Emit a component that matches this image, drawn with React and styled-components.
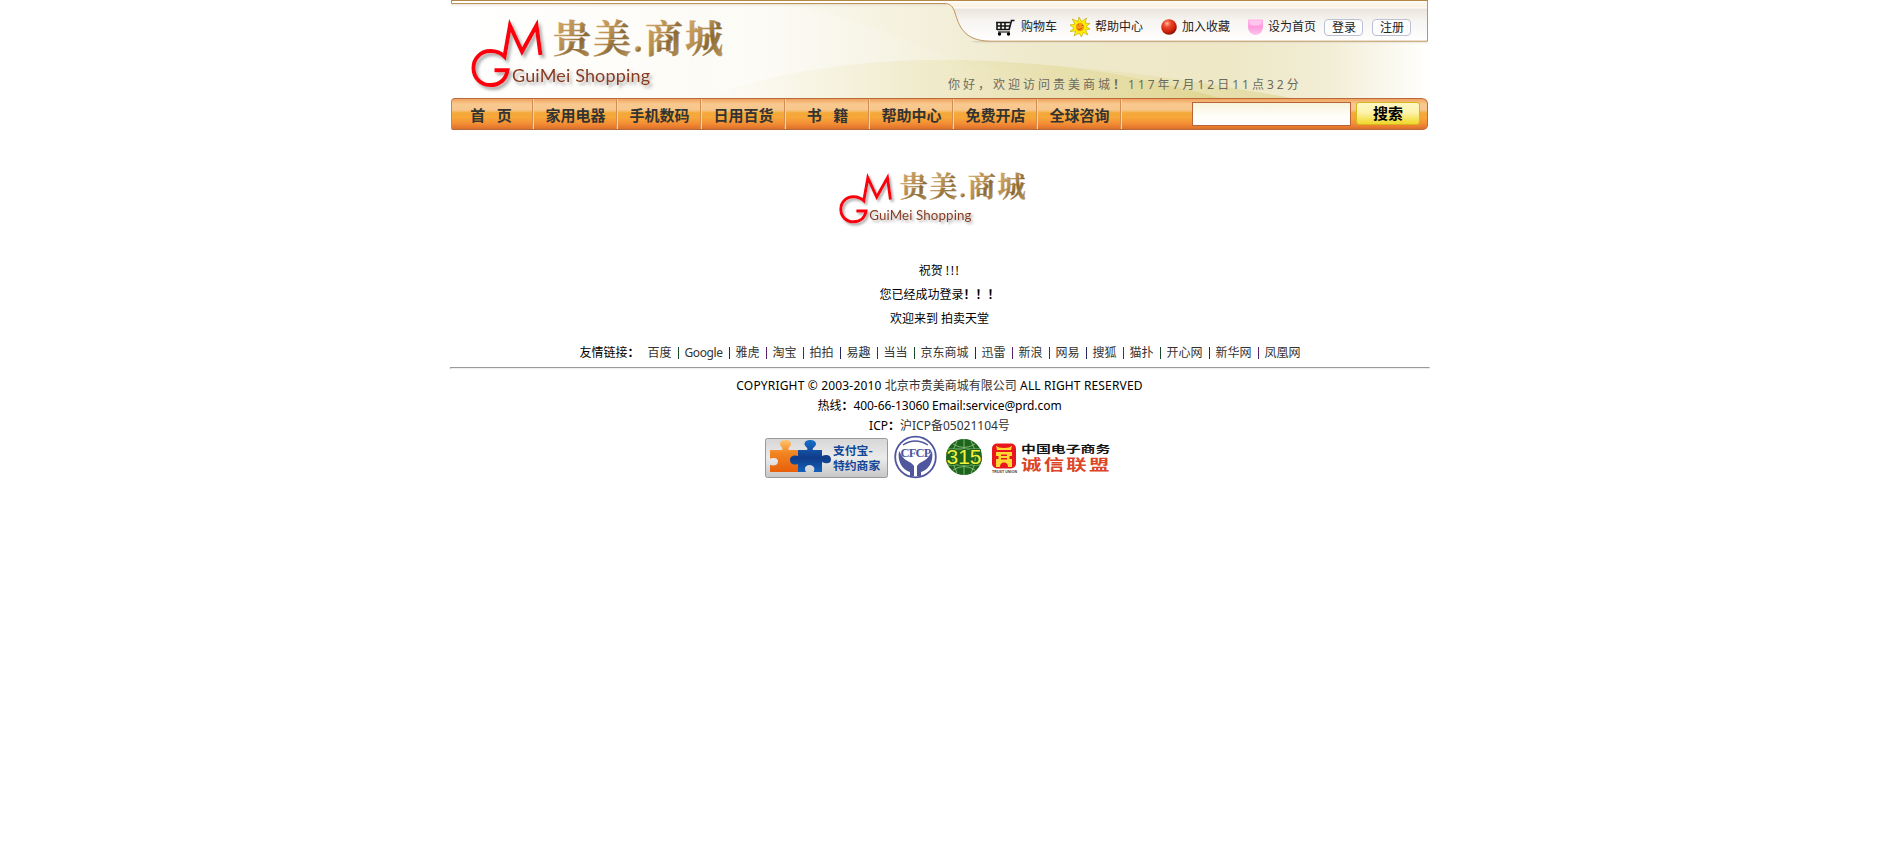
import React from 'react';
import styled, { createGlobalStyle } from 'styled-components';

const GlobalStyle = createGlobalStyle`
  body {
    margin: 0;
    background: #fff;
    color: #000;
    font: 12px/20px 'Noto Sans', 'Noto Sans CJK SC', sans-serif;
  }
`;

const Shell = styled.div`
  width: 979px;
  margin: 0 auto;
`;

const Header = styled.header`
  display: grid;
  grid-template-columns: 977px;
  grid-template-rows: 98px;
  margin: 0 1px;
`;

const Backdrop = styled.svg`
  grid-area: 1 / 1;
  display: block;
`;

const HeaderContent = styled.div`
  grid-area: 1 / 1;
  z-index: 1;
  display: flex;
  justify-content: space-between;
`;

const LogoArt = styled.svg`
  display: block;
  flex: none;
  width: ${(p) => p.$width}px;
  height: ${(p) => p.$width * 0.28}px;
  overflow: visible;
`;

const LogoLink = styled.a`
  padding: 15px 0 0 20px;
`;

const HeaderSide = styled.div`
  width: 480px;
  display: flex;
  flex-direction: column;
`;

const Tools = styled.div`
  height: 42px;
  padding: 12px 17px 0 0;
  box-sizing: border-box;
  display: flex;
  align-items: center;
  justify-content: flex-end;
`;

const Tool = styled.a`
  display: flex;
  align-items: center;
  gap: ${(p) => p.$gap || 6}px;
  margin-right: ${(p) => p.$after}px;
  color: #222;
  line-height: 18px;
  white-space: nowrap;
  svg { display: block; }
`;

const PillButton = styled.button`
  width: 39px;
  height: 17px;
  padding: 0;
  margin-left: ${(p) => p.$before || 0}px;
  border: 1px solid #bcc0d4;
  border-radius: 4px;
  background: #fdfdfd;
  color: #222;
  font: inherit;
  line-height: 15px;
  text-indent: 1px;
`;

const Greeting = styled.p`
  margin: 33px 0 0;
  color: #6b6a5e;
  letter-spacing: 3px;
  line-height: 20px;
  white-space: pre;
`;

const Spaced = styled.span`
  letter-spacing: ${(p) => p.$by}px;
  color: ${(p) => p.$color || 'inherit'};
`;

const Heavy = styled.b`
  font-weight: 700;
`;

const NavBar = styled.nav`
  height: 32px;
  margin: 0 1px;
  box-sizing: border-box;
  display: flex;
  border: 1px solid #b86a3c;
  border-left-color: #d9803a;
  border-radius: 4px 6px 5px 2px;
  background: linear-gradient(#f0a25e 0, #f8c98f 5px, #f7c68c 11px, #f4a836 14px, #f6a83a 18px, #f49136 24px, #e87a2e 28px, #d9702c 100%);
`;

const NavItem = styled.a`
  width: ${(p) => p.$width || 84}px;
  box-sizing: border-box;
  border-right: 1px solid #f9d3a4;
  box-shadow: inset -1px 0 0 #d28d50;
  color: #333;
  font-size: 15px;
  font-weight: 700;
  line-height: 32px;
  text-align: center;
  white-space: pre;
  text-indent: ${(p) => p.$shift || 0}px;
`;

const SearchForm = styled.div`
  flex: 1;
  display: flex;
  justify-content: flex-end;
  padding: 3px 7px 0 0;
  gap: 5px;
`;

const SearchInput = styled.input`
  width: 159px;
  height: 24px;
  box-sizing: border-box;
  border: 1px solid #b9633a;
  background: linear-gradient(#f6f3dc, #fffef8 60%, #fff);
  outline: none;
`;

const SearchButton = styled.button`
  width: 64px;
  height: 23px;
  padding: 0 0 1px;
  border: 1px solid #d6b71e;
  border-radius: 3px;
  background: linear-gradient(#fdf8c4, #fdf3ac 45%, #f3dc3c 90%, #efd733);
  color: #000;
  font: 700 15px/20px 'Noto Sans CJK SC', sans-serif;
`;

const Main = styled.main`
  display: flex;
  flex-direction: column;
  align-items: center;
  padding-top: 40px;
`;

const LogoSpot = styled.div`
  height: 89px;
  margin-right: 14px;
`;

const Message = styled.p`
  margin: 0;
  line-height: 24px;
  white-space: pre;
`;

const Footer = styled.footer`
  display: flex;
  flex-direction: column;
  align-items: center;
`;

const FriendLinks = styled.div`
  margin: 12px 0 0 1px;
  display: flex;
  white-space: nowrap;
`;

const FriendTitle = styled.span`
  width: 68px;
`;

const FriendLink = styled.a`
  display: flex;
  color: #333;
  letter-spacing: ${(p) => (p.$latin ? '-0.4px' : 0)};
  width: ${(p) => p.$width}px;
`;

const Bar = styled.i`
  width: 1px;
  height: 12px;
  margin: 4px 6px 0;
  background: ${(p) => p.$color};
`;

const Rule = styled.hr`
  align-self: stretch;
  margin: 4px -1px 7px 0;
  height: 0;
  border: 1px solid;
  border-color: #9a9a9a #eee #eee #9a9a9a;
`;

const Line = styled.p`
  margin: 0;
  white-space: pre;
`;

const Badges = styled.div`
  display: flex;
  height: 44px;
  margin: -1px 4px 0 0;
`;

const Badge = styled.svg`
  display: block;
  flex: none;
  margin-left: ${(p) => p.$before || 0}px;
  margin-top: ${(p) => p.$top || 0}px;
  overflow: visible;
`;

const serif = "'Noto Serif CJK SC', 'Noto Sans CJK SC', serif";

function Logo({ width, id }) {
  return (
    <LogoArt $width={width} viewBox="0 0 254 71">
      <defs>
        <linearGradient id={id} x1="0" y1="0" x2="1" y2="1">
          <stop offset="0" stopColor="#d9b377" />
          <stop offset=".45" stopColor="#b98f50" />
          <stop offset=".62" stopColor="#8a6934" />
          <stop offset="1" stopColor="#c5a168" />
        </linearGradient>
        <filter id={`${id}s`} x="-20%" y="-20%" width="150%" height="150%">
          <feDropShadow dx="2.5" dy="3" stdDeviation="1.6" floodColor="#777" floodOpacity=".6" />
        </filter>
      </defs>
      <path
        d="M23.500 55.300H36.500C35 65 28 70 19.500 70C10 70 2.500 63 2.500 53C2.500 43 10 36 19.500 36C26 36 30 38 33.500 41.500L39 10.500L51 36.500L65.500 10.500L69.500 40"
        fill="none"
        stroke="#fb0007"
        strokeWidth="4"
        filter={`url(#${id}s)`}
      />
      <g fill={`url(#${id})`} stroke={`url(#${id})`} strokeWidth=".4" fontFamily={serif} fontSize="38" fontWeight="700">
        <text x="82" y="37">贵</text>
        <text x="122" y="37">美</text>
        <circle cx="167" cy="34" r="2.800" />
        <text x="174" y="37">商</text>
        <text x="214" y="37">城</text>
      </g>
      <text x="41" y="67" fill="#8a3b1c" fontFamily="Lato, sans-serif" fontSize="18" textLength="138" filter={`url(#${id}s)`}>
        GuiMei Shopping
      </text>
    </LogoArt>
  );
}

function HeaderArt() {
  return (
    <Backdrop width="977" height="98" viewBox="0 0 977 98">
      <defs>
        <linearGradient id="base" x1="0" x2="1">
          <stop offset="0" stopColor="#fff" />
          <stop offset=".2" stopColor="#fdfcf8" />
          <stop offset=".32" stopColor="#fbfaf2" />
          <stop offset=".45" stopColor="#f5f2e0" />
          <stop offset=".6" stopColor="#efe9cc" />
          <stop offset=".8" stopColor="#eee8c6" />
          <stop offset=".9" stopColor="#f2eed6" />
          <stop offset="1" stopColor="#fffffd" />
        </linearGradient>
        <linearGradient id="wave" x1="0" x2="1">
          <stop offset="0" stopColor="#e5dc9e" stopOpacity="0" />
          <stop offset=".5" stopColor="#e2d993" stopOpacity=".5" />
          <stop offset="1" stopColor="#d3c567" stopOpacity=".7" />
        </linearGradient>
        <linearGradient id="ray" x1="0" x2="1">
          <stop offset="0" stopColor="#fff" stopOpacity="0" />
          <stop offset=".3" stopColor="#fff" stopOpacity=".5" />
          <stop offset="1" stopColor="#fff" stopOpacity="0" />
        </linearGradient>
        <linearGradient id="tab" x1="0" y1="0" x2="0" y2="1">
          <stop offset="0" stopColor="#fff" />
          <stop offset=".15" stopColor="#fcf0df" />
          <stop offset=".2" stopColor="#fff" />
          <stop offset=".21" stopColor="#eae4da" />
          <stop offset=".5" stopColor="#f7f5f2" />
          <stop offset="1" stopColor="#fff" />
        </linearGradient>
        <linearGradient id="edge" x1="0" y1="0" x2="0" y2="1">
          <stop offset="0" stopColor="#b9a88c" stopOpacity=".5" />
          <stop offset="1" stopColor="#fff" stopOpacity="0" />
        </linearGradient>
      </defs>
      <rect width="977" height="98" fill="url(#base)" />
      <path d="M180 98V4H340C410 20 480 45 580 98Z" fill="url(#ray)" opacity=".5" />
      <path d="M250 98C340 66 440 56 540 61C640 66 700 80 770 98Z" fill="url(#wave)" opacity=".6" />
      <path d="M500 61C620 62 730 78 840 98H640C600 80 560 68 500 61Z" fill="url(#wave)" opacity=".55" />
      <path d="M0 3H495V8H0Z" fill="url(#edge)" />
      <path d="M520 41H977V45H530Z" fill="url(#edge)" />
      <path d="M0 0H976.500V41.500H545C512 41.500 508 25 504 13C502 6 499 3.500 493 3.500H0Z" fill="url(#tab)" />
      <path d="M0 1H500V3H0Z" fill="#fff" />
      <path d="M.5 0V3.500H493C499 3.500 502 6 504 13C508 25 512 41.200 540 41.200H976.500V0" fill="none" stroke="#bd955c" />
      <path d="M0 .5H977" stroke="#b58743" />
    </Backdrop>
  );
}

const CartIcon = () => (
  <svg width="21" height="17" viewBox="0 0 21 17">
    <path d="M2 3.500H16M3 7H15.500M3 10.500H15M3 3V11M7 4V11M11 4V11M15 11L17.500 1.500H20.500" fill="none" stroke="#151515" strokeWidth="1.600" />
    <path d="M4 13H16" stroke="#222" strokeWidth="1.200" />
    <circle cx="5.500" cy="15" r="1.700" />
    <circle cx="14.500" cy="15" r="1.700" />
  </svg>
);

const SunIcon = () => (
  <svg width="20" height="20" viewBox="0 0 20 20">
    <path
      d="M9 0L11.500 4.500L16.500 1L15 6L20 6.500L16 9.500L20 12L15.500 13L18 18L13 15.500L11.500 20L9 16L4 19L5.500 14L0 14.500L4 11L0 8L5 7L2 2L8 4.500Z"
      fill="#fff000"
      stroke="#b9a100"
      strokeWidth=".6"
    />
    <circle cx="10" cy="10" r="4.200" fill="#f49b13" />
    <path d="M7.500 8H9M12 8.500H13M7.500 12Q10 13.500 12 11" stroke="#d04c00" fill="none" />
  </svg>
);

const BallIcon = () => (
  <svg width="16" height="17" viewBox="0 0 16 17">
    <defs>
      <radialGradient id="ball" cx=".38" cy=".28" r=".75">
        <stop offset="0" stopColor="#ffb9a4" />
        <stop offset=".3" stopColor="#ee4a2b" />
        <stop offset=".75" stopColor="#c91c08" />
        <stop offset="1" stopColor="#74150c" />
      </radialGradient>
    </defs>
    <circle cx="8" cy="8" r="7.800" fill="url(#ball)" />
  </svg>
);

const ShieldIcon = () => (
  <svg width="15" height="17" viewBox="0 0 15 17">
    <defs>
      <linearGradient id="pink" x1="0" y1="0" x2="0" y2="1">
        <stop offset="0" stopColor="#ffb2e8" />
        <stop offset=".5" stopColor="#ff9bdc" />
        <stop offset="1" stopColor="#ffc6ee" />
      </linearGradient>
    </defs>
    <path d="M0 .5H15V8C15 13 11 16 7.500 16C4 16 0 13 0 8Z" fill="url(#pink)" />
    <path d="M1.500 1.500H13.500V5Q7.500 8 1.500 5Z" fill="#ffc6ed" />
  </svg>
);

const AlipayBadge = () => (
  <Badge $top={3} width="123" height="40" viewBox="0 0 123 40">
    <defs>
      <linearGradient id="plate" x1="0" y1="0" x2="0" y2="1">
        <stop offset="0" stopColor="#d6d6d6" />
        <stop offset=".5" stopColor="#ebebeb" />
        <stop offset="1" stopColor="#c6c6c6" />
      </linearGradient>
      <linearGradient id="orange" x1="0" y1="0" x2="0" y2="1">
        <stop offset="0" stopColor="#ffc56e" />
        <stop offset=".4" stopColor="#f28522" />
        <stop offset="1" stopColor="#e85f0a" />
      </linearGradient>
      <linearGradient id="blue" x1="0" y1="0" x2="0" y2="1">
        <stop offset="0" stopColor="#1770cc" />
        <stop offset=".55" stopColor="#103b88" />
        <stop offset="1" stopColor="#1261b8" />
      </linearGradient>
    </defs>
    <rect x=".5" y=".5" width="122" height="39" rx="2" fill="url(#plate)" stroke="#999" />
    <path d="M5 12H17C19 10 15 8.500 15 6C15 .5 26 .5 26 6C26 8.500 22 10 24 12H34V18H27V26H34V34H5V27C9 28 13 27.500 13 23.500C13 19.500 9 19.500 5 20.500Z" fill="url(#orange)" />
    <path d="M33 12H42C44 10 39.500 8.500 39.500 6C39.500 .5 51 .5 51 6C51 8.500 46.500 10 48 12H57V18C61 16 66 17 66 21.500C66 26 61 26 57 24V34H48.500C51 30 48 27 44.500 27C41 27 38.500 30 41 34H33V26C29 27.500 25 26 25 22C25 18 29 16.500 33 18Z" fill="url(#blue)" />
    <g fill="#124698" fontFamily="'Noto Sans CJK SC', sans-serif" fontSize="11.800" fontWeight="700">
      <text x="68" y="17">支付宝-</text>
      <text x="68" y="32">特约商家</text>
    </g>
  </Badge>
);

const CfcpBadge = () => (
  <Badge $before={6} width="43" height="44" viewBox="0 0 43 44">
    <circle cx="21.500" cy="22" r="20.300" fill="#fff" stroke="#4f569e" strokeWidth="1.800" />
    <path d="M5 16C3 27 9 35 16 37V41H20V31C17 26 12 27 8 21ZM38 16C40 27 34 35 27 37V41H23V31C26 26 31 27 35 21Z" fill="#4f569e" />
    <path d="M9 10Q21 2 34 10" fill="none" stroke="#4f569e" strokeWidth="1.300" />
    <text x="21.500" y="22" fill="#4f569e" textAnchor="middle" fontFamily="'Liberation Serif', serif" fontSize="12.500" fontWeight="700" letterSpacing="-.8">CFCP</text>
  </Badge>
);

const GlobeBadge = () => (
  <Badge $before={8} width="38" height="44" viewBox="0 0 38 44">
    <circle cx="19" cy="22" r="18" fill="#1d641d" />
    <path d="M19 4V40M12 6Q3 22 12 38M26 6Q35 22 26 38M3 14H35M3 30H35M8 9Q19 16 30 9M8 35Q19 28 30 35" fill="none" stroke="#8fbd7c" strokeWidth=".9" />
    <text x="1.500" y="29" fill="#f4f13a" stroke="#1d641d" strokeWidth="2" paintOrder="stroke" fontFamily="'Liberation Sans', sans-serif" fontSize="20" textLength="35" lengthAdjust="spacingAndGlyphs">315</text>
  </Badge>
);

const UnionBadge = () => (
  <Badge $before={8} width="120" height="44" viewBox="0 0 120 44">
    <rect x="1" y="8.500" width="24" height="25" rx="5" fill="#e8171d" />
    <path d="M5 10.500Q7 13 13 13Q19 13 21 10.500L20 15H6ZM5 17H21V21H18.500V24H21V32H17Q17 27.500 13 27.500Q9 27.500 9 32H5V24H7.500V21H5ZM10 19.500V21H16V19.500ZM10 23V24.500H16V23Z" fill="#ffd834" fillRule="evenodd" />
    <text x="1" y="37.500" fill="#333" fontFamily="'Liberation Sans', sans-serif" fontSize="3.500" fontWeight="700" textLength="25">TRUST UNION</text>
    <g fontFamily="'Noto Sans CJK SC', sans-serif" fontWeight="700">
      <text transform="translate(30 17.500) scale(1.38 .95)" fontSize="10.800" fill="#141414">中国电子商务</text>
      <text transform="translate(30 35) scale(1.36 .98)" fontSize="15" fill="#dc4526" textLength="65">诚信联盟</text>
    </g>
  </Badge>
);

const NAV = [
  { text: '首   页', width: 82, shift: -3 },
  { text: '家用电器' },
  { text: '手机数码' },
  { text: '日用百货' },
  { text: '书   籍' },
  { text: '帮助中心' },
  { text: '免费开店' },
  { text: '全球咨询' },
];

const FRIENDS = ['百度', 'Google', '雅虎', '淘宝', '拍拍', '易趣', '当当', '京东商城', '迅雷', '新浪', '网易', '搜狐', '猫扑', '开心网', '新华网', '凤凰网'];
const BAR_COLORS = ['#56206a', '#164a28', '#26265e'];

export default function App() {
  return (
    <Shell>
      <GlobalStyle />
      <Header>
        <HeaderArt />
        <HeaderContent>
          <LogoLink><Logo width={254} id="gold" /></LogoLink>
          <HeaderSide>
            <Tools>
              <Tool $after={13}><CartIcon />购物车</Tool>
              <Tool $after={18} $gap={5}><SunIcon />帮助中心</Tool>
              <Tool $after={18} $gap={5}><BallIcon />加入收藏</Tool>
              <Tool $after={8} $gap={5}><ShieldIcon />设为首页</Tool>
              <PillButton>登录</PillButton>
              <PillButton $before={9}>注册</PillButton>
            </Tools>
            <Greeting>你好，欢迎访问贵美商城<Heavy>！</Heavy>117年7月12日11点32分</Greeting>
          </HeaderSide>
        </HeaderContent>
      </Header>
      <NavBar>
        {NAV.map((item) => (
          <NavItem key={item.text} $width={item.width} $shift={item.shift}>{item.text}</NavItem>
        ))}
        <SearchForm>
          <SearchInput />
          <SearchButton>搜索</SearchButton>
        </SearchForm>
      </NavBar>
      <Main>
        <LogoSpot><Logo width={188} id="goldSmall" /></LogoSpot>
        <Message>祝贺 <Spaced $by={1.6}>!!!</Spaced></Message>
        <Message>您已经成功登录<Heavy>！！！</Heavy></Message>
        <Message>欢迎来到 拍卖天堂</Message>
      </Main>
      <Footer>
        <FriendLinks>
          <FriendTitle>友情链接<Heavy>：</Heavy></FriendTitle>
          {FRIENDS.map((name, i) => (
            <React.Fragment key={name}>
              {i > 0 && <Bar $color={BAR_COLORS[i % 3]} />}
              <FriendLink $latin={name === 'Google'} $width={name === 'Google' ? 38 : name.length * 12}>{name}</FriendLink>
            </React.Fragment>
          ))}
        </FriendLinks>
        <Rule />
        <Line><Spaced $by={0.17}>COPYRIGHT © 2003-2010 </Spaced><Spaced $by={0} $color="#333">北京市贵美商城有限公司</Spaced><Spaced $by={0.15}> ALL RIGHT RESERVED</Spaced></Line>
        <Line>热线<Heavy>：</Heavy><Spaced $by={-0.07}>400-66-13060 Email:service@prd.com</Spaced></Line>
        <Line>ICP<Heavy>：</Heavy><Spaced $by={0} $color="#333">沪ICP备05021104号</Spaced></Line>
        <Badges>
          <AlipayBadge />
          <CfcpBadge />
          <GlobeBadge />
          <UnionBadge />
        </Badges>
      </Footer>
    </Shell>
  );
}
